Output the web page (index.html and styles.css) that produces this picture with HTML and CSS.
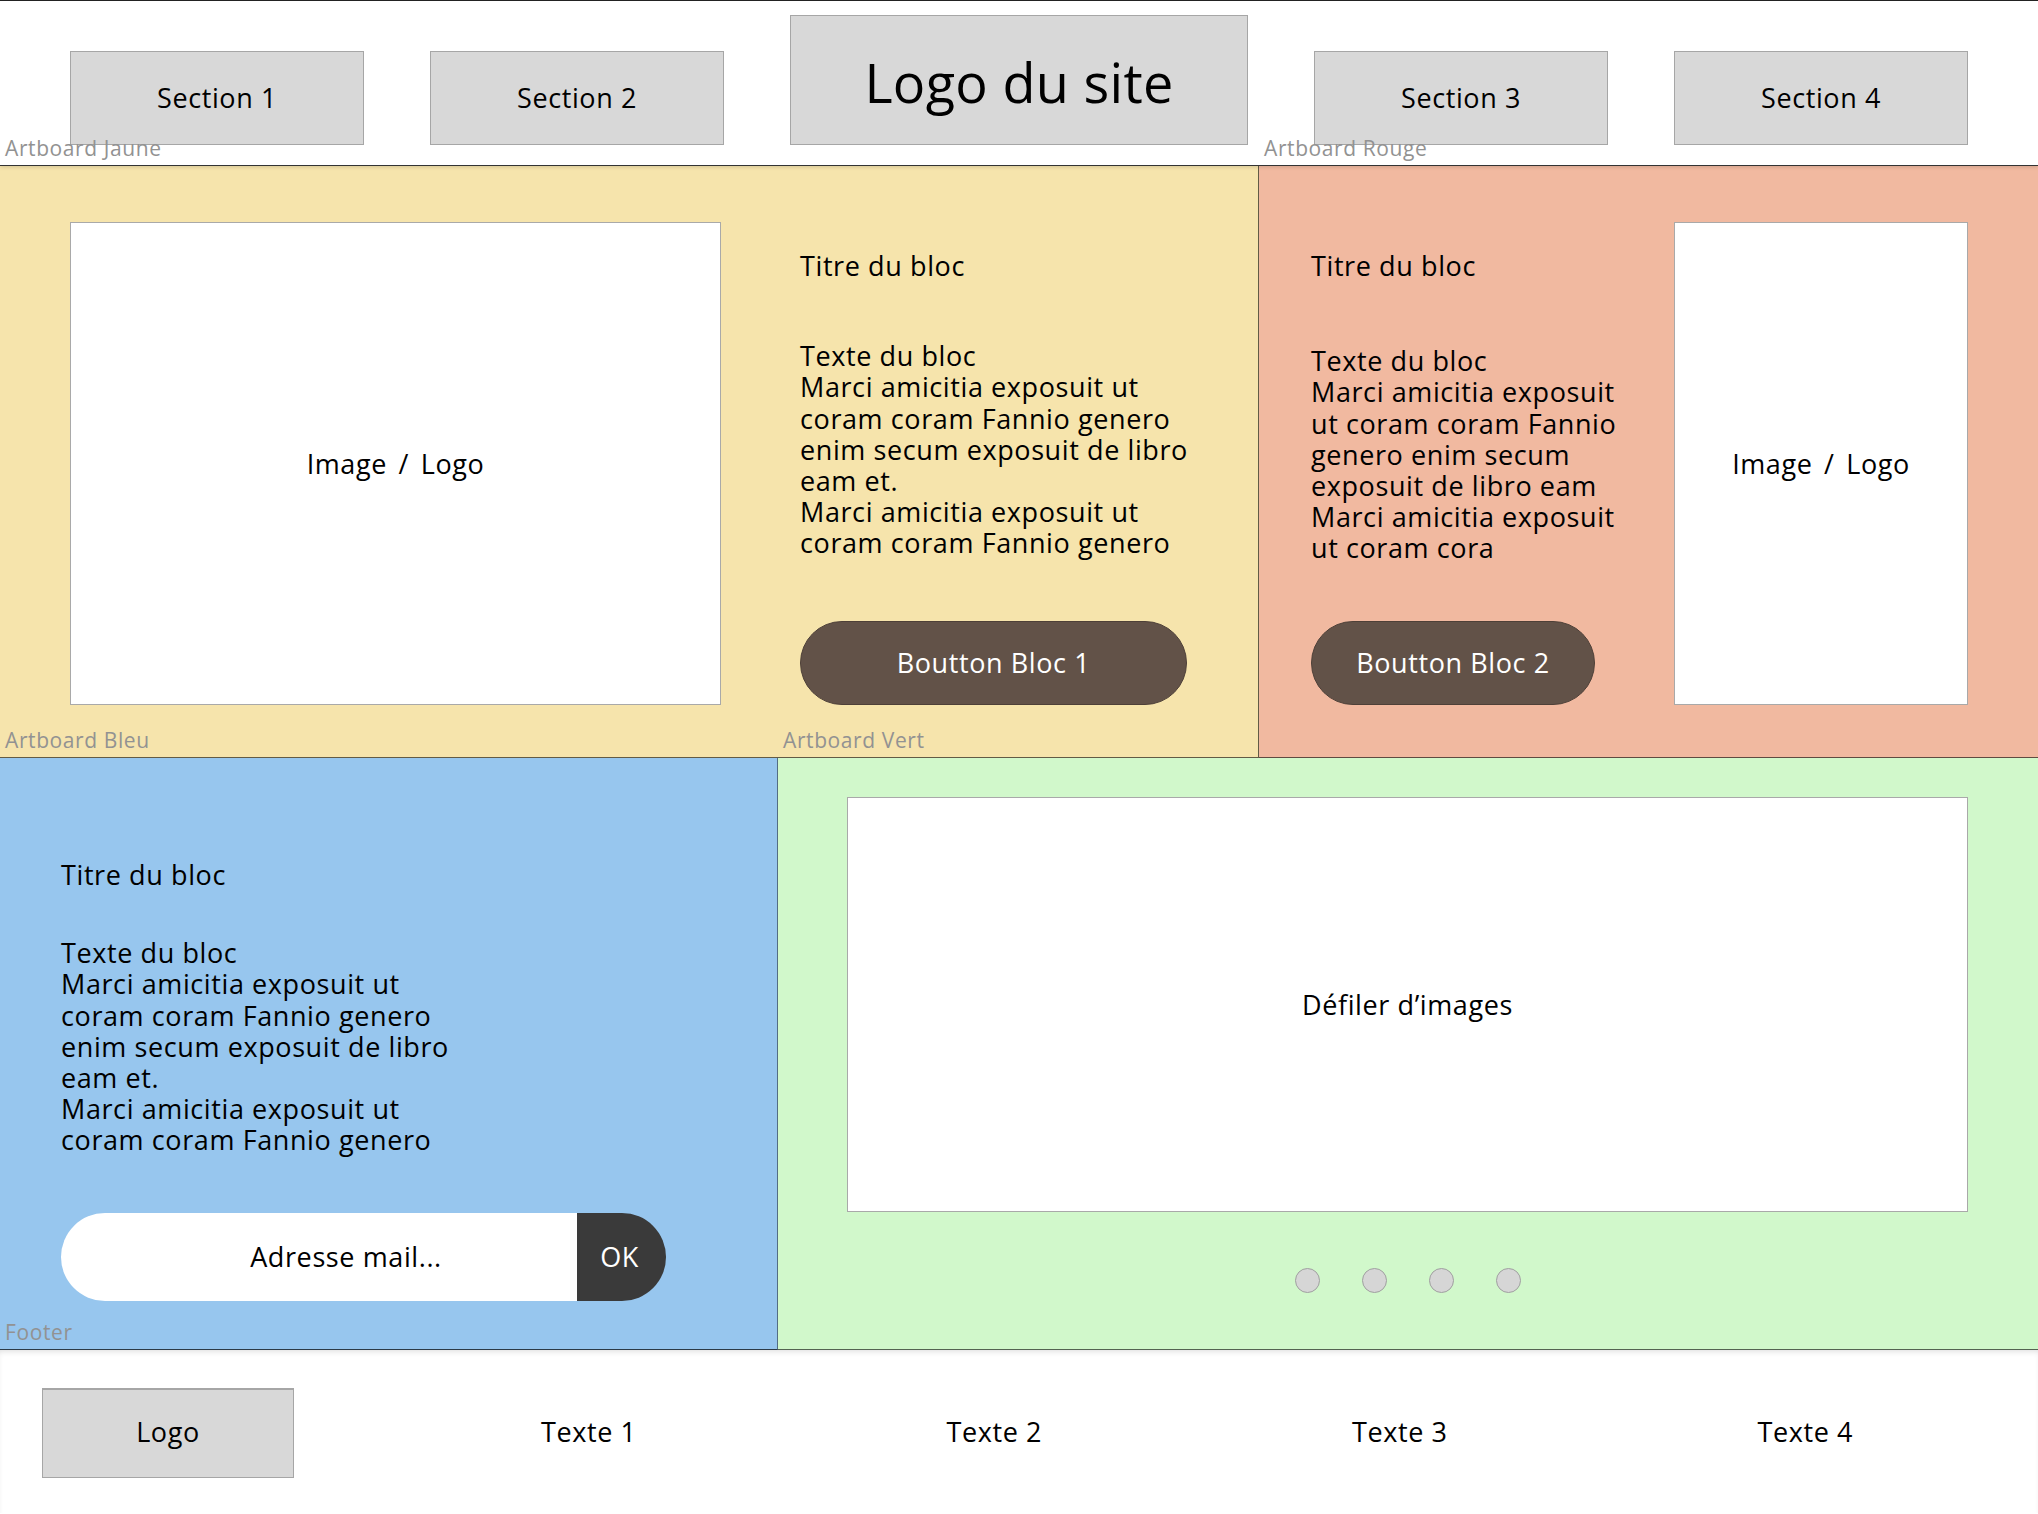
FILE: index.html
```html
<!DOCTYPE html>
<html lang="fr">
<head>
  <meta charset="UTF-8">
  <title>Maquette du site</title>
  <link rel="stylesheet" href="styles.css">
</head>
<body>

  <header class="topbar">
    <a class="nav-box" href="#">Section 1</a>
    <a class="nav-box" href="#">Section 2</a>
    <div class="site-logo">Logo du site</div>
    <a class="nav-box" href="#">Section 3</a>
    <a class="nav-box" href="#">Section 4</a>
  </header>

  <div class="row">
    <section class="artboard jaune">
      <span class="artboard-label">Artboard Jaune</span>
      <div class="image-box wide">Image / Logo</div>
      <div class="bloc">
        <h2 class="bloc-title">Titre du bloc</h2>
        <p class="bloc-text">Texte du bloc<br>Marci amicitia exposuit ut<br>coram coram Fannio genero<br>enim secum exposuit de libro<br>eam et.<br>Marci amicitia exposuit ut<br>coram coram Fannio genero</p>
        <a class="btn btn-1" href="#">Boutton Bloc 1</a>
      </div>
    </section>

    <section class="artboard rouge">
      <span class="artboard-label">Artboard Rouge</span>
      <div class="bloc">
        <h2 class="bloc-title">Titre du bloc</h2>
        <p class="bloc-text lower">Texte du bloc<br>Marci amicitia exposuit<br>ut coram coram Fannio<br>genero enim secum<br>exposuit de libro eam<br>Marci amicitia exposuit<br>ut coram cora</p>
        <a class="btn btn-2" href="#">Boutton Bloc 2</a>
      </div>
      <div class="image-box narrow">Image / Logo</div>
    </section>
  </div>

  <div class="row">
    <section class="artboard bleu">
      <span class="artboard-label">Artboard Bleu</span>
      <h2 class="bloc-title">Titre du bloc</h2>
      <p class="bloc-text">Texte du bloc<br>Marci amicitia exposuit ut<br>coram coram Fannio genero<br>enim secum exposuit de libro<br>eam et.<br>Marci amicitia exposuit ut<br>coram coram Fannio genero</p>
      <form class="newsletter">
        <input type="text" placeholder="Adresse mail...">
        <button type="button">OK</button>
      </form>
    </section>

    <section class="artboard vert">
      <span class="artboard-label">Artboard Vert</span>
      <div class="carousel">Défiler d’images</div>
      <div class="dots">
        <span class="dot"></span>
        <span class="dot"></span>
        <span class="dot"></span>
        <span class="dot"></span>
      </div>
    </section>
  </div>

  <footer class="footer">
    <span class="artboard-label">Footer</span>
    <div class="footer-logo">Logo</div>
    <div class="footer-links">
      <a href="#">Texte 1</a>
      <a href="#">Texte 2</a>
      <a href="#">Texte 3</a>
      <a href="#">Texte 4</a>
    </div>
  </footer>

</body>
</html>
```

FILE: styles.css
```css
body {
  font-family: "Open Sans", "Noto Sans", sans-serif;
  font-size: 27px;
  letter-spacing: 0.6px;
  line-height: 31.2px;
  color: #000;
  background-color: #fff;
  margin: 0;
  padding: 0;
  border-top: 1px solid #222;
}
a {
  color: inherit;
  text-decoration: none;
}

/* header */
.topbar {
  height: 144px;
  padding: 0 70px 20px 70px;
  display: flex;
  align-items: flex-end;
  gap: 66px;
  border-bottom: 1px solid #333;
  box-shadow: 0 1px 4px rgba(0, 0, 0, 0.15);
  position: relative;
  z-index: 2;
}
.nav-box {
  width: 294px;
  height: 94px;
  box-sizing: border-box;
  background-color: #d8d8d8;
  border: 1px solid #a6a6a6;
  display: flex;
  align-items: center;
  justify-content: center;
}
.site-logo {
  width: 458px;
  height: 130px;
  box-sizing: border-box;
  padding-top: 6px;
  background-color: #d8d8d8;
  border: 1px solid #a6a6a6;
  display: flex;
  align-items: center;
  justify-content: center;
  font-size: 54px;
  letter-spacing: 0.3px;
}

/* artboards */
.row {
  display: flex;
}
.artboard {
  position: relative;
  box-sizing: border-box;
  border-bottom: 1px solid rgba(0, 0, 0, 0.6);
}
.artboard-label {
  position: absolute;
  top: -31px;
  left: 5px;
  font-size: 21px;
  letter-spacing: 0.6px;
  line-height: 26px;
  color: #929292;
  z-index: 3;
}
.jaune {
  background-color: #f6e4ac;
  width: 1259px;
  height: 592px;
  padding: 56px 0 0 70px;
  display: flex;
  align-items: flex-start;
  gap: 79px;
  border-right: 1px solid rgba(0, 0, 0, 0.6);
}
.rouge {
  background-color: #f1b9a0;
  width: 779px;
  height: 592px;
  padding: 56px 70px 0 52px;
  display: flex;
  align-items: flex-start;
  justify-content: space-between;
}
.image-box {
  height: 483px;
  box-sizing: border-box;
  background-color: #fff;
  border: 1px solid #a9a9a9;
  display: flex;
  align-items: center;
  justify-content: center;
  word-spacing: 4px;
}
.image-box.wide {
  width: 651px;
}
.image-box.narrow {
  width: 294px;
}
.bloc {
  height: 483px;
  box-sizing: border-box;
  display: flex;
  flex-direction: column;
  align-items: flex-start;
  padding-top: 28px;
}
.bloc-title {
  font-size: 27px;
  font-weight: normal;
  margin: 0;
}
.bloc-text {
  margin: 59px 0 0 0;
  white-space: nowrap;
}
.bloc-text.lower {
  margin-top: 64px;
}
.btn {
  margin-top: auto;
  height: 84px;
  box-sizing: border-box;
  border-radius: 42px;
  background-color: #625248;
  border: 1px solid #4e4038;
  color: #fff;
  display: flex;
  align-items: center;
  justify-content: center;
}
.btn-1 {
  width: 387px;
}
.btn-2 {
  width: 284px;
}

.bleu {
  background-color: #97c6ee;
  width: 778px;
  height: 592px;
  padding: 101px 0 0 61px;
  border-right: 1px solid rgba(0, 0, 0, 0.45);
  border-bottom-color: rgba(0, 0, 0, 0.7);
}
.bleu .bloc-text {
  margin-top: 47px;
}
.newsletter {
  margin-top: 57px;
  width: 605px;
  height: 88px;
  display: flex;
}
.newsletter input {
  flex: 1;
  min-width: 0;
  border: none;
  border-radius: 44px 0 0 44px;
  background-color: #fff;
  font-family: inherit;
  font-size: 27px;
  letter-spacing: 0.6px;
  text-align: center;
  padding: 0 0 0 54px;
  outline: none;
}
.newsletter input::placeholder {
  color: #000;
}
.newsletter button {
  width: 89px;
  border: none;
  border-radius: 0 44px 44px 0;
  background-color: #3a3a3a;
  color: #fff;
  font-family: inherit;
  font-size: 27px;
  letter-spacing: 0.6px;
  padding: 0 4px 0 0;
}

.vert {
  background-color: #d1f8cb;
  width: 1260px;
  height: 592px;
  padding: 39px 70px 0 69px;
}
.carousel {
  height: 415px;
  box-sizing: border-box;
  background-color: #fff;
  border: 1px solid #a9a9a9;
  display: flex;
  align-items: center;
  justify-content: center;
}
.dots {
  margin-top: 56px;
  display: flex;
  justify-content: center;
  gap: 42px;
}
.dot {
  width: 25px;
  height: 25px;
  box-sizing: border-box;
  border-radius: 50%;
  background-color: #d6d6d6;
  border: 1.5px solid #a0a0a0;
}

/* footer */
.footer {
  position: relative;
  height: 163px;
  padding: 38px 0 0 42px;
  box-sizing: border-box;
  display: flex;
  align-items: flex-start;
  box-shadow: inset 0 4px 6px -3px rgba(0, 0, 0, 0.15);
}
.footer-logo {
  width: 252px;
  height: 90px;
  box-sizing: border-box;
  padding-bottom: 3px;
  background-color: #d8d8d8;
  border: 1px solid #a6a6a6;
  border-top-width: 2px;
  display: flex;
  align-items: center;
  justify-content: center;
}
.footer-links {
  margin-left: 92px;
  height: 87px;
  display: flex;
  align-items: center;
}
.footer-links a {
  width: 405.5px;
  text-align: center;
}
```
